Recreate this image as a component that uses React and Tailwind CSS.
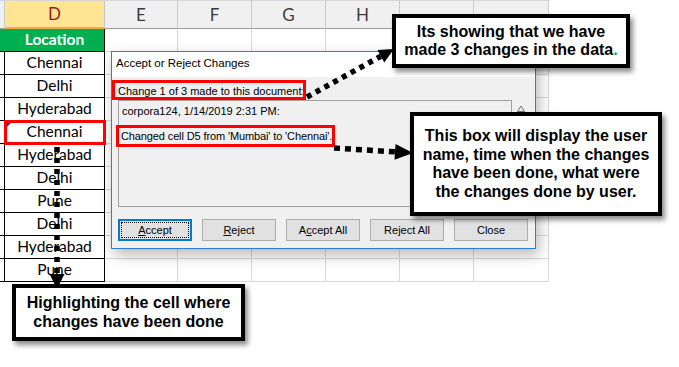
import React from "react";

const headers = ["", "D", "E", "F", "G", "H", "", ""];
const locations = ["Location", "Chennai", "Delhi", "Hyderabad", "Chennai", "Hyderabad", "Delhi", "Pune", "Delhi", "Hyderabad", "Pune"];

// dotted line + filled head, drawn in page coordinates
const DottedArrow = ({ x1, y1, x2, y2, head = 15, wide = 14, dash = "5 5" }) => {
  const len = Math.hypot(x2 - x1, y2 - y1);
  const ux = (x2 - x1) / len;
  const uy = (y2 - y1) / len;
  const bx = x2 - ux * head;
  const by = y2 - uy * head;
  const px = (-uy * wide) / 2;
  const py = (ux * wide) / 2;
  return (
    <g>
      <line x1={x1} y1={y1} x2={bx} y2={by} stroke="#000" strokeWidth="5.5" strokeDasharray={dash} />
      <polygon points={`${x2},${y2} ${bx + px},${by + py} ${bx - px},${by - py}`} fill="#000" />
    </g>
  );
};

const Callout = ({ className, children }) => (
  <div
    className={`absolute flex items-center justify-center border-4 border-black bg-white text-center font-['Liberation_Sans',Arial,sans-serif] text-[16px] font-bold leading-[18.5px] text-black shadow-[3px_4px_5px_rgba(0,0,0,0.45)] ${className}`}
  >
    <div>{children}</div>
  </div>
);

const DialogButton = ({ children, focused }) =>
  focused ? (
    <div className="h-[22px] w-[74px] border-2 border-[#0078d7] bg-[#e1e1e1] p-[1px]">
      <div className="flex h-full items-center justify-center border border-dotted border-black">{children}</div>
    </div>
  ) : (
    <div className="flex h-[22px] w-[74px] items-center justify-center border border-[#adadad] bg-[#e1e1e1]">
      {children}
    </div>
  );

export default function App() {
  return (
    <div className="relative h-[367px] w-[679px] overflow-hidden bg-white">
      {/* Sheet */}
      <div className="grid w-[549px] grid-cols-[5px_100px_73px_74px_74px_74px_74px_75px] font-['Lato',sans-serif]">
        {headers.map((h, i) => (
          <div
            key={`h${i}`}
            className={
              i === 1
                ? "flex h-[29px] items-center justify-center border-r border-b-2 border-t border-r-[#c6c6c6] border-t-[#d6d6d6] border-b-[#efab3c] bg-[#ffe494] text-[17px] text-[#9a1b1b]"
                : "flex h-[29px] items-center justify-center border-r border-b border-t border-r-[#cacaca] border-t-[#d6d6d6] border-b-[#9e9e9e] bg-[#f0f0f0] text-[17px] text-[#3c3c3c]"
            }
          >
            {h}
          </div>
        ))}
        {locations.map((loc, r) => (
          <React.Fragment key={r}>
            <div
              className={
                r === 0
                  ? "h-[23px] border-r border-b border-r-[#00b050] border-b-black bg-[#00b050]"
                  : "h-[23px] border-r border-b border-black bg-white"
              }
            />
            <div
              className={
                r === 0
                  ? "flex h-[23px] items-center justify-center border-r border-b border-black bg-[#00b050] text-[15.5px] font-bold text-white"
                  : r === 4
                  ? "relative flex h-[23px] items-center justify-center border-r border-b border-dashed border-black bg-white text-[15.5px] text-black"
                  : "flex h-[23px] items-center justify-center border-r border-b border-black bg-white text-[15.5px] text-black"
              }
            >
              {r === 4 && (
                <span className="absolute left-[2px] top-[1px] h-0 w-0 border-t-[5px] border-r-[5px] border-t-[#2135b8] border-r-transparent" />
              )}
              {loc}
            </div>
            {[0, 1, 2, 3, 4, 5].map((c) => (
              <div key={c} className="h-[23px] border-r border-b border-[#d9d9d9] bg-white" />
            ))}
          </React.Fragment>
        ))}
      </div>

      {/* Accept or Reject Changes dialog */}
      <div className="absolute left-[111px] top-[51px] flex h-[198px] w-[425px] flex-col border border-[#2b7fd4] bg-[#f0f0f0] font-['Liberation_Sans',Arial,sans-serif] text-[11px] leading-[14px] text-black shadow-[3px_6px_14px_rgba(0,0,0,0.28)]">
        <div className="h-[25px] bg-white pl-[4px] pt-[4px] text-[11.5px]">Accept or Reject Changes</div>
        <div className="h-[23px] pl-[6px] pt-[7px]">Change 1 of 3 made to this document:</div>
        <div className="flex h-[107px] pl-[6px]">
          <div className="w-[394px] border border-[#a0a0a0] pl-[3px] pt-[3px]">
            <div>corpora124, 1/14/2019 2:31 PM:</div>
            <div className="-ml-px mt-[11px] tracking-[-0.12px]">Changed cell D5 from 'Mumbai' to 'Chennai'.</div>
          </div>
          <div className="flex w-[18px] justify-center pt-[5px]">
            <svg width="8" height="7" viewBox="0 0 8 7">
              <polyline points="0.5,6.5 4,1 7.5,6.5 0.5,6.5" fill="none" stroke="#707070" strokeWidth="1" />
            </svg>
          </div>
        </div>
        <div className="mt-[12px] flex gap-[10px] pl-[6px]">
          <DialogButton focused>
            <span className="underline">A</span>ccept
          </DialogButton>
          <DialogButton>
            <span className="underline">R</span>eject
          </DialogButton>
          <DialogButton>
            A<span className="underline">c</span>cept All
          </DialogButton>
          <DialogButton>
            Re<span className="underline">j</span>ect All
          </DialogButton>
          <DialogButton>Close</DialogButton>
        </div>
      </div>

      {/* red highlight boxes */}
      <div className="absolute left-[112px] top-[80px] h-[20px] w-[194px] border-[3px] border-[#ff0000]" />
      <div className="absolute left-[116px] top-[125px] h-[22px] w-[219px] border-[3px] border-[#ff0000]" />
      <div className="absolute left-[4px] top-[120px] h-[25px] w-[102px] border-[3px] border-[#ff0000]" />

      {/* dotted arrows */}
      <svg className="pointer-events-none absolute left-0 top-0" width="679" height="367">
        <DottedArrow x1={307} y1={97} x2={394} y2={49} head={15} wide={14} />
        <DottedArrow x1={334} y1={148} x2={413} y2={153} head={18} wide={16} dash="6 5" />
        <DottedArrow x1={57} y1={147} x2={57} y2={289} head={15} wide={15} dash="5 6" />
      </svg>

      {/* callouts */}
      <Callout className="left-[392px] top-[14px] h-[54px] w-[238px]">
        Its showing that we have
        <br />
        made 3 changes in the data<span className="text-[#00b050]">.</span>
      </Callout>
      <Callout className="left-[410px] top-[112px] h-[104px] w-[252px]">
        This box will display the user
        <br />
        name, time when the changes
        <br />
        have been done, what were
        <br />
        the changes done by user.
      </Callout>
      <Callout className="left-[12px] top-[284px] h-[57px] w-[233px]">
        Highlighting the cell where
        <br />
        changes have been done
      </Callout>
    </div>
  );
}
